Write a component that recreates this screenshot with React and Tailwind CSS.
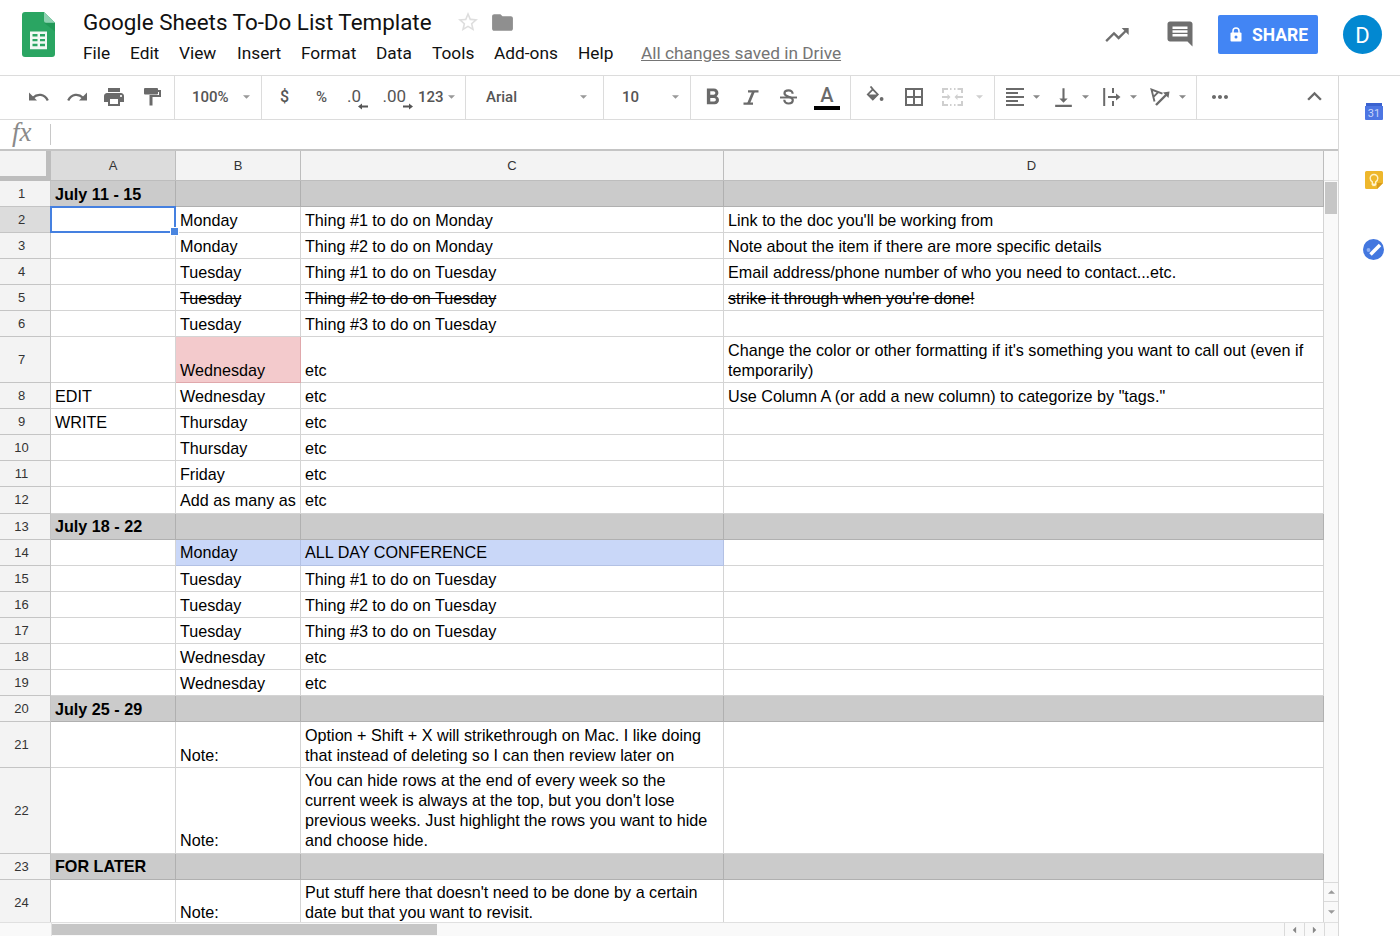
import React from 'react';
import clsx from 'clsx';
import {
  MdPrint,
  MdFormatBold,
  MdBorderAll,
  MdFormatAlignLeft,
  MdVerticalAlignBottom,
  MdMoreHoriz,
  MdTrendingUp,
  MdInsertComment,
  MdFolder,
  MdStarBorder,
  MdKeyboardArrowUp,
} from 'react-icons/md';

const MENU = [
  { label: 'File', width: 'w-[47px]' },
  { label: 'Edit', width: 'w-[49px]' },
  { label: 'View', width: 'w-[58px]' },
  { label: 'Insert', width: 'w-[64px]' },
  { label: 'Format', width: 'w-[75px]' },
  { label: 'Data', width: 'w-[56px]' },
  { label: 'Tools', width: 'w-[62px]' },
  { label: 'Add-ons', width: 'w-[84px]' },
  { label: 'Help', width: 'w-[63px]' },
];

const ROWS = [
  { a: 'July 11 - 15', section: true },
  { b: 'Monday', c: 'Thing #1 to do on Monday', d: "Link to the doc you'll be working from", selected: true },
  { b: 'Monday', c: 'Thing #2 to do on Monday', d: 'Note about the item if there are more specific details' },
  { b: 'Tuesday', c: 'Thing #1 to do on Tuesday', d: 'Email address/phone number of who you need to contact...etc.' },
  { b: 'Tuesday', c: 'Thing #2 to do on Tuesday', d: "strike it through when you're done!", done: true },
  { b: 'Tuesday', c: 'Thing #3 to do on Tuesday' },
  {
    b: 'Wednesday',
    c: 'etc',
    d: "Change the color or other formatting if it's something you want to call out (even if\ntemporarily)",
    height: 46,
    fillB: 'bg-[#f3cacc] border-[#e0a8ac]',
  },
  { a: 'EDIT', b: 'Wednesday', c: 'etc', d: 'Use Column A (or add a new column) to categorize by "tags."' },
  { a: 'WRITE', b: 'Thursday', c: 'etc' },
  { b: 'Thursday', c: 'etc' },
  { b: 'Friday', c: 'etc' },
  { b: 'Add as many as', c: 'etc', height: 27, lift: true },
  { a: 'July 18 - 22', section: true, lift: true },
  {
    b: 'Monday',
    c: 'ALL DAY CONFERENCE',
    fillB: 'bg-[#c9d7f8] border-[#b3c1e4]',
    fillC: 'bg-[#c9d7f8] border-[#b3c1e4]',
    lift: true,
  },
  { b: 'Tuesday', c: 'Thing #1 to do on Tuesday' },
  { b: 'Tuesday', c: 'Thing #2 to do on Tuesday' },
  { b: 'Tuesday', c: 'Thing #3 to do on Tuesday' },
  { b: 'Wednesday', c: 'etc' },
  { b: 'Wednesday', c: 'etc' },
  { a: 'July 25 - 29', section: true },
  {
    b: 'Note:',
    c: 'Option + Shift + X will strikethrough on Mac. I like doing\nthat instead of deleting so I can then review later on',
    height: 46,
  },
  {
    b: 'Note:',
    c: "You can hide rows at the end of every week so the\ncurrent week is always at the top, but you don't lose\nprevious weeks. Just highlight the rows you want to hide\nand choose hide.",
    height: 86,
    lift: true,
  },
  { a: 'FOR LATER', section: true, lift: true },
  {
    b: 'Note:',
    c: "Put stuff here that doesn't need to be done by a certain\ndate but that you want to revisit.",
    height: 46,
    lift: true,
  },
];

const Caret = ({ className }) => (
  <svg viewBox="0 0 8 4" className={clsx('w-[7px] h-[4px] shrink-0', className)} fill="currentColor">
    <path d="M0 0h8L4 4z" />
  </svg>
);

const SheetsLogo = () => (
  <svg width="33" height="45" viewBox="0 0 33 46" preserveAspectRatio="none">
    <path d="M3 0h19l11 11v32a3 3 0 0 1-3 3H3a3 3 0 0 1-3-3V3a3 3 0 0 1 3-3z" fill="#2aa562" />
    <path d="M22 11h11v9z" fill="#1b8f4e" opacity=".6" />
    <path d="M22 0l11 11H24a2 2 0 0 1-2-2z" fill="#8ed1b1" />
    <path
      fillRule="evenodd"
      d="M8 20h17v18H8zM10.500 22.500v2.500h5v-2.500zM18 22.500v2.500h5v-2.500zM10.500 27.500v2.500h5v-2.500zM18 27.500v2.500h5v-2.500zM10.500 32.500v2.500h5v-2.500zM18 32.500v2.500h5v-2.500z"
      fill="#f1f8f4"
    />
  </svg>
);

const LockIcon = () => (
  <svg width="12" height="15" viewBox="0 0 12 15">
    <path d="M3 6V4a3 3 0 0 1 6 0v2" fill="none" stroke="#fff" strokeWidth="1.500" />
    <rect x=".5" y="5.500" width="11" height="9" rx="1" fill="#fff" />
    <circle cx="6" cy="10" r="1.500" fill="#4285f4" />
  </svg>
);

const UndoIcon = ({ className }) => (
  <svg width="20" height="10" viewBox="0 0 20 10" className={className}>
    <path d="M0 .5V8.500h8z" fill="currentColor" />
    <path d="M4 5.800C8.500 1.200 15.500 1.800 18.800 8.600" fill="none" stroke="currentColor" strokeWidth="2.300" />
  </svg>
);

const PaintIcon = () => (
  <svg width="17" height="18" viewBox="0 0 17 18" fill="currentColor">
    <path d="M1 0h12a1 1 0 0 1 1 1v1h3v7H8.500v8.500H5.500V7H15V4h-1v1.500a1 1 0 0 1-1 1H1a1 1 0 0 1-1-1V1a1 1 0 0 1 1-1z" />
  </svg>
);

const ItalicIcon = () => (
  <svg width="16" height="15" viewBox="0 0 16 15" fill="none" stroke="currentColor">
    <path d="M5 1.400h10.500M.5 13.600H10" strokeWidth="2.200" />
    <path d="M10.500 1.500l-5 12" strokeWidth="2.700" />
  </svg>
);

const StrikeIcon = () => (
  <svg width="17" height="16" viewBox="0 0 17 16" fill="none" stroke="currentColor">
    <path
      d="M12.600 4.800C12.600 2.600 11 1.300 8.600 1.300S4.500 2.500 4.500 4.300c0 4.200 8.300 2.700 8.300 6.800 0 2-1.700 3.400-4.200 3.400-2.600 0-4.300-1.400-4.300-3.700"
      strokeWidth="2.200"
    />
    <path d="M0 8.500h17" strokeWidth="1.900" />
  </svg>
);

const FillIcon = () => (
  <svg width="18" height="17" viewBox="0 0 18 17">
    <path d="M4.500 .5l2.500 2.800M6.800 3.300L1.800 8.500l5 5 5-5z" fill="none" stroke="currentColor" strokeWidth="1.800" />
    <path d="M1.500 8.500h10.600l-5.300 5.200z" fill="currentColor" />
    <circle cx="15.600" cy="13" r="1.900" fill="currentColor" />
  </svg>
);

const MergeIcon = () => (
  <svg width="21" height="18" viewBox="0 0 21 18" fill="none" stroke="currentColor" strokeWidth="2">
    <path d="M1 5V1h5M8 1h1.500M12 1h1.500M15.500 1H20v4M1 13v4h5M8 17h1.500M12 17h1.500M15.500 17H20v-4" />
    <path d="M0 9h6M21 9h-6" />
    <path d="M5.500 6l3 3-3 3zM15.500 6l-3 3 3 3z" fill="currentColor" stroke="none" />
  </svg>
);

const WrapIcon = () => (
  <svg width="18" height="18" viewBox="0 0 18 18" fill="none" stroke="currentColor" strokeWidth="2">
    <path d="M1.200 0v18M10 0v5M10 13V18M5 9h10" />
    <path d="M13 5.500L17.500 9 13 12.500z" fill="currentColor" stroke="none" />
  </svg>
);

const RotateIcon = () => (
  <svg width="21" height="18" viewBox="0 0 21 18" fill="none" stroke="currentColor" strokeWidth="1.900">
    <path d="M6 17L17 6" strokeWidth="2.400" />
    <path d="M13 4.500L19.500 3.500 18.500 10z" fill="currentColor" stroke="none" />
    <path d="M4.500 13.500L1.500 1.500l11 4.200M3.500 8.800l4.500-4.500" />
  </svg>
);

const CalendarIcon = () => (
  <svg width="18" height="17" viewBox="0 0 18 17">
    <path d="M1 0h16v3h1v13a1 1 0 0 1-1 1H1a1 1 0 0 1-1-1V3h1z" fill="#4d76e3" />
    <path d="M1 0h16v3H1z" fill="#3a62d0" />
    <text x="9" y="14" textAnchor="middle" fontSize="11" fontFamily="Roboto, sans-serif" fill="#c9d6fa">31</text>
  </svg>
);

const KeepIcon = () => (
  <svg width="18" height="18" viewBox="0 0 18 18">
    <path d="M1.500 0h15A1.500 1.500 0 0 1 18 1.500V12l-6 6H1.500A1.500 1.500 0 0 1 0 16.500v-15A1.500 1.500 0 0 1 1.500 0z" fill="#eeb72c" />
    <path d="M12 18v-6h6z" fill="#d99b1b" />
    <path d="M7.300 10.800C5.500 9.800 5.200 8.500 5.200 7.300a3.800 3.800 0 0 1 7.600 0c0 1.200-.3 2.500-2.100 3.500v2.500H7.300z" fill="none" stroke="#fff3cb" strokeWidth="1.400" />
    <path d="M7.300 14.500h3.400" stroke="#fff3cb" strokeWidth="1.200" />
  </svg>
);

const TasksIcon = () => (
  <svg width="21" height="21" viewBox="0 0 21 21">
    <circle cx="10.500" cy="10.500" r="10.500" fill="#4377df" />
    <path d="M7.500 15.500L17 6" stroke="#fff" strokeWidth="3.600" />
    <circle cx="5.500" cy="11" r="1.900" fill="#8fb0f3" />
  </svg>
);

// the arrow hangs under the last digit
const Decimal = ({ text, right }) => (
  <div className="flex flex-col items-end">
    <span className="text-[17px] leading-[16px] font-normal">{text}</span>
    <svg width="10" height="7" viewBox="0 0 10 7" className="-mt-px -mr-[7px]" fill="currentColor">
      {right ? <path d="M0 2.600h6V.5l4 3-4 3V4.400H0z" /> : <path d="M10 2.600H4V.5l-4 3 4 3V4.400h6z" />}
    </svg>
  </div>
);

const Group = ({ className, children }) => (
  <div className={clsx('flex h-full items-center border-r border-[#dcdcdc] pb-px shrink-0', className)}>{children}</div>
);

const Header = () => (
  <div className="flex h-[75px] shrink-0">
    <div className="w-[83px] pl-[22px] pt-[12px]">
      <SheetsLogo />
    </div>
    <div className="flex-1">
      <div className="flex h-[40px] items-center pt-[4px]">
        <h1 className="w-[373px] text-[22.400px] leading-[28px] text-[#111] whitespace-nowrap">Google Sheets To-Do List Template</h1>
        <MdStarBorder className="size-[24px] text-[#dedede]" />
        <MdFolder className="ml-[10px] size-[25px] text-[#8f8f8f]" />
      </div>
      <div className="flex h-[28px] items-center text-[17.300px] text-[#111] whitespace-nowrap">
        {MENU.map((item) => (
          <span key={item.label} className={item.width}>{item.label}</span>
        ))}
        <span className="text-[#757575] underline">All changes saved in Drive</span>
      </div>
    </div>
    <div className="flex items-start text-[#6e6e6e]">
      <MdTrendingUp className="mt-[21px] size-[28px]" />
      <MdInsertComment className="ml-[34px] mt-[19px] size-[30px]" />
      <button className="ml-[23px] mt-[15px] flex h-[39px] w-[100px] items-center rounded-[2px] bg-[#4285f4] pl-[12px] text-[17.500px] font-bold text-white">
        <LockIcon />
        <span className="ml-[10px] pt-px">SHARE</span>
      </button>
      <div className="ml-[25px] mr-[18px] mt-[15px] flex size-[39px] items-center justify-center rounded-full bg-[#0288d1] pt-px text-[22px] text-white">D</div>
    </div>
  </div>
);

const Toolbar = () => (
  <div className="flex h-[44px] shrink-0 items-center border-b border-[#dcdcdc] text-[#6a6a6a]">
    <Group className="w-[175px] pl-[29px]">
      <UndoIcon />
      <UndoIcon className="ml-[18px] -scale-x-100" />
      <MdPrint className="ml-[15px] size-[24px]" />
      <span className="ml-[18px]"><PaintIcon /></span>
    </Group>
    <Group className="w-[87px] pl-[17px] pb-0 text-[15px] font-medium text-[#555]">
      <span className="w-[51px]">100%</span>
      <Caret className="text-[#999]" />
    </Group>
    <Group className="w-[204px] pl-[18px] text-[15px] font-medium text-[#555]">
      <span className="w-[36px] text-[16px]">$</span>
      <span className="w-[31px]">%</span>
      <div className="w-[14px] pt-[4px] flex justify-end"><Decimal text=".0" /></div>
      <div className="ml-[19px] w-[26px] pt-[4px] flex justify-end"><Decimal text=".00" right /></div>
      <span className="ml-[12px] w-[30px]">123</span>
      <Caret className="text-[#999]" />
    </Group>
    <Group className="w-[138px] pl-[20px] text-[15px] font-medium text-[#555]">
      <span className="w-[94px]">Arial</span>
      <Caret className="text-[#999]" />
    </Group>
    <Group className="w-[87px] pl-[18px] pb-0 text-[15px] font-medium text-[#555]">
      <span className="w-[50px]">10</span>
      <Caret className="text-[#999]" />
    </Group>
    <Group className="w-[160px] pl-[8px]">
      <MdFormatBold className="size-[27px]" />
      <span className="ml-[17px]"><ItalicIcon /></span>
      <span className="ml-[21px]"><StrikeIcon /></span>
      <div className="ml-[17px] flex w-[26px] flex-col items-center">
        <span className="text-[20px] leading-[20px] font-medium">A</span>
        <span className="mt-px h-[4px] w-full bg-black" />
      </div>
    </Group>
    <Group className="w-[144px] pl-[15px]">
      <span className="-mt-[6px]"><FillIcon /></span>
      <MdBorderAll className="ml-[18px] size-[24px]" />
      <span className="ml-[16px] text-[#cfcfcf]"><MergeIcon /></span>
      <Caret className="ml-[13px] text-[#cfcfcf]" />
    </Group>
    <Group className="w-[202px] pl-[8px]">
      <MdFormatAlignLeft className="size-[24px]" />
      <Caret className="ml-[6px] text-[#888]" />
      <MdVerticalAlignBottom className="ml-[11px] size-[25px]" />
      <Caret className="ml-[6px] text-[#888]" />
      <span className="ml-[14px]"><WrapIcon /></span>
      <Caret className="ml-[9px] text-[#888]" />
      <span className="ml-[13px]"><RotateIcon /></span>
      <Caret className="ml-[8px] text-[#888]" />
    </Group>
    <div className="flex flex-1 items-center justify-between pl-[11px] pr-[9px] pb-[2px]">
      <MdMoreHoriz className="size-[24px]" />
      <MdKeyboardArrowUp className="size-[29px]" />
    </div>
  </div>
);

const FormulaBar = () => (
  <div className="flex h-[31px] shrink-0 items-center border-b-2 border-[#c4c4c4]">
    <span className="w-[50px] pl-[12px] pb-[4px] font-['Liberation_Serif',serif] text-[27px] leading-[25px] italic text-[#8a8a8a]">fx</span>
    <span className="h-[21px] w-px bg-[#c8c8c8]" />
  </div>
);

const Cell = ({ width, text, row, fill, children }) => (
  <div
    className={clsx(
      'relative flex shrink-0 items-end border-r border-b pl-[4px] leading-[20px] whitespace-pre',
      width,
      row.lift ? 'pb-[3px]' : 'pb-[2px]',
      fill || (row.section ? 'bg-[#cbcbcb] border-[#b0b0b0]' : 'border-[#d4d4d4]'),
      row.section && 'font-bold',
      row.done && 'line-through'
    )}
  >
    {text}
    {children}
  </div>
);

const Sheet = () => (
  <div className="flex-1 overflow-hidden font-['Liberation_Sans',Arial,sans-serif]">
    <div className="flex h-[30px] text-[13px] text-[#333]">
      <div className="w-[51px] border-r-[5px] border-b-[5px] border-[#bdbdbd] bg-[#f3f3f3]" />
      <div className="flex w-[125px] items-center justify-center border-r border-b border-[#bdbdbd] bg-[#dcdcdc]">A</div>
      <div className="flex w-[125px] items-center justify-center border-r border-b border-[#bdbdbd] bg-[#f3f3f3]">B</div>
      <div className="flex w-[423px] items-center justify-center border-r border-b border-[#bdbdbd] bg-[#f3f3f3]">C</div>
      <div className="flex w-[600px] items-center justify-center border-r border-b border-[#bdbdbd] bg-[#f3f3f3] pl-[16px]">D</div>
    </div>
    {ROWS.map((row, i) => (
      <div key={i} className="flex text-[16.160px] text-black" style={{ height: row.height || 26 }}>
        <div
          className={clsx(
            'flex w-[51px] shrink-0 items-center justify-center border-r border-b border-[#c4c4c4] pr-[7px] text-[13px] text-[#333]',
            row.selected ? 'bg-[#dcdcdc]' : 'bg-[#f3f3f3]'
          )}
        >
          {i + 1}
        </div>
        <Cell width="w-[125px]" text={row.a} row={row}>
          {row.selected && (
            <div className="absolute -top-px -left-px z-10 h-[27px] w-[126px] border-2 border-[#4580e0]">
              <span className="absolute -right-[5px] -bottom-[5px] size-[9px] border border-white bg-[#4a86e0]" />
            </div>
          )}
        </Cell>
        <Cell width="w-[125px]" text={row.b} row={row} fill={row.fillB} />
        <Cell width="w-[423px]" text={row.c} row={row} fill={row.fillC} />
        <Cell width="w-[600px]" text={row.d} row={row} />
      </div>
    ))}
  </div>
);

const VerticalScroll = () => (
  <div className="flex w-[14px] shrink-0 flex-col bg-[#f9f9f9] text-[#999]">
    <div className="h-[30px] border-b border-[#e2e2e2]" />
    <div className="mx-px mt-px h-[32px] bg-[#c6c6c6]" />
    <div className="flex-1" />
    <div className="flex h-[19px] items-center justify-center border-t border-[#dadada]"><Caret className="rotate-180" /></div>
    <div className="flex h-[21px] items-center justify-center border-t border-[#dadada]"><Caret /></div>
  </div>
);

const HorizontalScroll = () => (
  <div className="flex h-[14px] shrink-0 border-t border-[#e0e0e0] bg-[#f9f9f9] text-[#888]">
    <div className="w-[52px] border-r border-[#e0e0e0]" />
    <div className="mt-px h-[11px] w-[385px] bg-[#c6c6c6]" />
    <div className="flex-1" />
    <div className="flex w-[20px] items-center justify-center border-l border-[#dadada]"><Caret className="rotate-90" /></div>
    <div className="flex w-[20px] items-center justify-center border-l border-[#dadada]"><Caret className="-rotate-90" /></div>
    <div className="w-[14px] border-l border-[#dadada]" />
  </div>
);

const App = () => {
  return (
    <div className="flex h-[936px] w-[1400px] flex-col overflow-hidden bg-white font-[Roboto,sans-serif]">
      <Header />
      <div className="flex min-h-0 flex-1 border-t border-[#dcdcdc]">
        <div className="flex w-[1338px] flex-col">
          <Toolbar />
          <FormulaBar />
          <div className="flex min-h-0 flex-1">
            <Sheet />
            <VerticalScroll />
          </div>
          <HorizontalScroll />
        </div>
        <div className="flex flex-1 flex-col items-center border-l border-[#d8d8d8] pl-[8px] pt-[27px]">
          <CalendarIcon />
          <div className="mt-[51px]"><KeepIcon /></div>
          <div className="mt-[50px]"><TasksIcon /></div>
        </div>
      </div>
    </div>
  );
};

export default App;
